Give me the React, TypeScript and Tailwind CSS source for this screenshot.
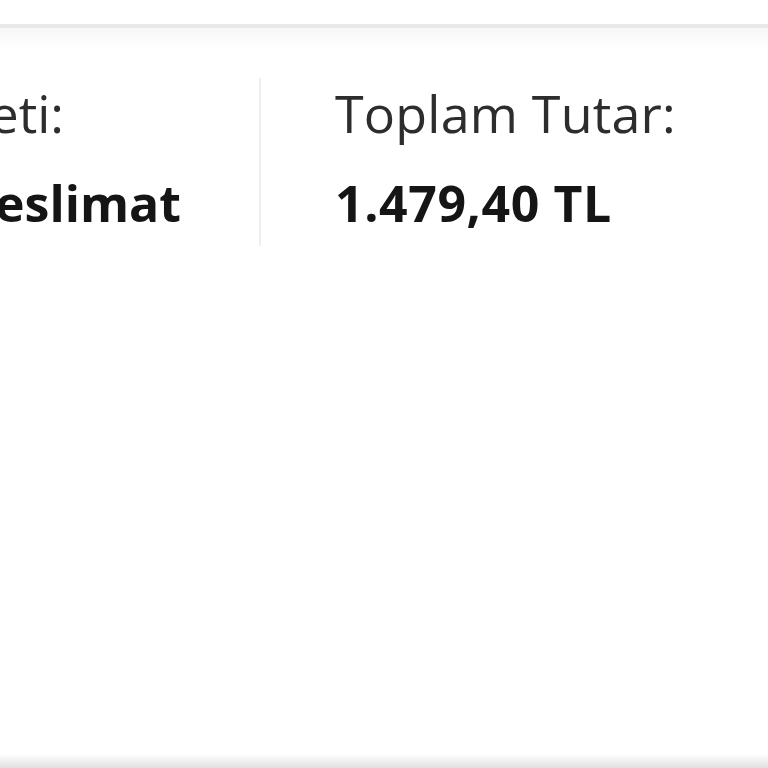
import React from "react";

export default function App() {
  const font = { fontFamily: '"Open Sans", "Liberation Sans", sans-serif' };
  return (
    <div className="w-[768px] h-[768px] bg-white flex flex-col overflow-hidden" style={font}>
      <div className="h-[24px] bg-white shrink-0" />
      <div className="h-[4px] bg-[#e9e9e9] shrink-0" />
      <div className="h-[20px] bg-gradient-to-b from-[#f7f7f7] to-white shrink-0" />
      <div className="flex flex-1 min-h-0">
        <div className="w-[259px] shrink-0 flex flex-col pt-[30px]">
          <div className="w-[64px] flex justify-end whitespace-nowrap text-[52px] leading-[70px] text-[#2d2d2d]">
            <span>Teslimat Hizmeti:</span>
          </div>
          <div className="w-[181px] flex justify-end whitespace-nowrap text-[50px] leading-[110px] font-bold text-[#151515]">
            <span>Standart Teslimat</span>
          </div>
        </div>
        <div className="w-[2px] h-[168px] mt-[30px] bg-[#efefef] shrink-0" />
        <div className="flex flex-col pl-[74px] pt-[30px]">
          <div className="whitespace-nowrap text-[52px] leading-[70px] text-[#2d2d2d] tracking-[0.2px]">Toplam Tutar:</div>
          <div className="whitespace-nowrap text-[50px] leading-[110px] font-bold text-[#151515] tracking-[0.6px]">1.479,40 TL</div>
        </div>
      </div>
      <div className="h-[14px] bg-gradient-to-b from-white to-[#e0e0e0] shrink-0" />
    </div>
  );
}
